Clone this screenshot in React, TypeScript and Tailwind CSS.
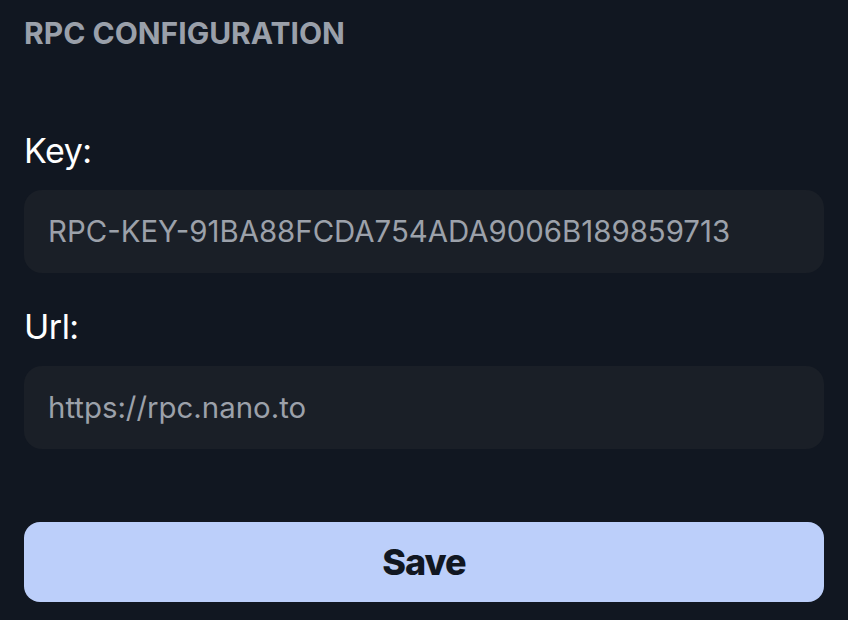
import React from "react";

const fields = [
  { label: "Key:", value: "RPC-KEY-91BA88FCDA754ADA9006B189859713" },
  { label: "Url:", value: "https://rpc.nano.to" },
];

export default function App() {
  return (
    <div
      className="w-[848px] h-[620px] overflow-hidden bg-[#111721] px-6 pt-[16px]"
      style={{ fontFamily: "Inter, 'Noto Sans', sans-serif" }}
    >
      <h1 className="text-[30px] leading-[34px] font-bold text-[#9aa0aa]">
        RPC CONFIGURATION
      </h1>

      <div className="mt-[79px] flex flex-col">
        {fields.map((field, index) => (
          <div key={field.label} className={index > 0 ? "mt-[32px]" : ""}>
            <label className="block text-[34px] leading-[44px] tracking-[-0.5px] text-white">
              {field.label}
            </label>
            <div className="mt-[17px] h-[83px] w-[800px] rounded-[18px] bg-[#1a1f27] px-6 flex items-center">
              <span className="text-[29.4px] text-[#9ca1aa] pt-px">{field.value}</span>
            </div>
          </div>
        ))}
      </div>

      <button className="mt-[73px] h-[80px] w-[800px] rounded-[16px] bg-[#bccffa] text-[36px] font-extrabold tracking-[-1px] text-[#111721]">
        Save
      </button>
    </div>
  );
}
